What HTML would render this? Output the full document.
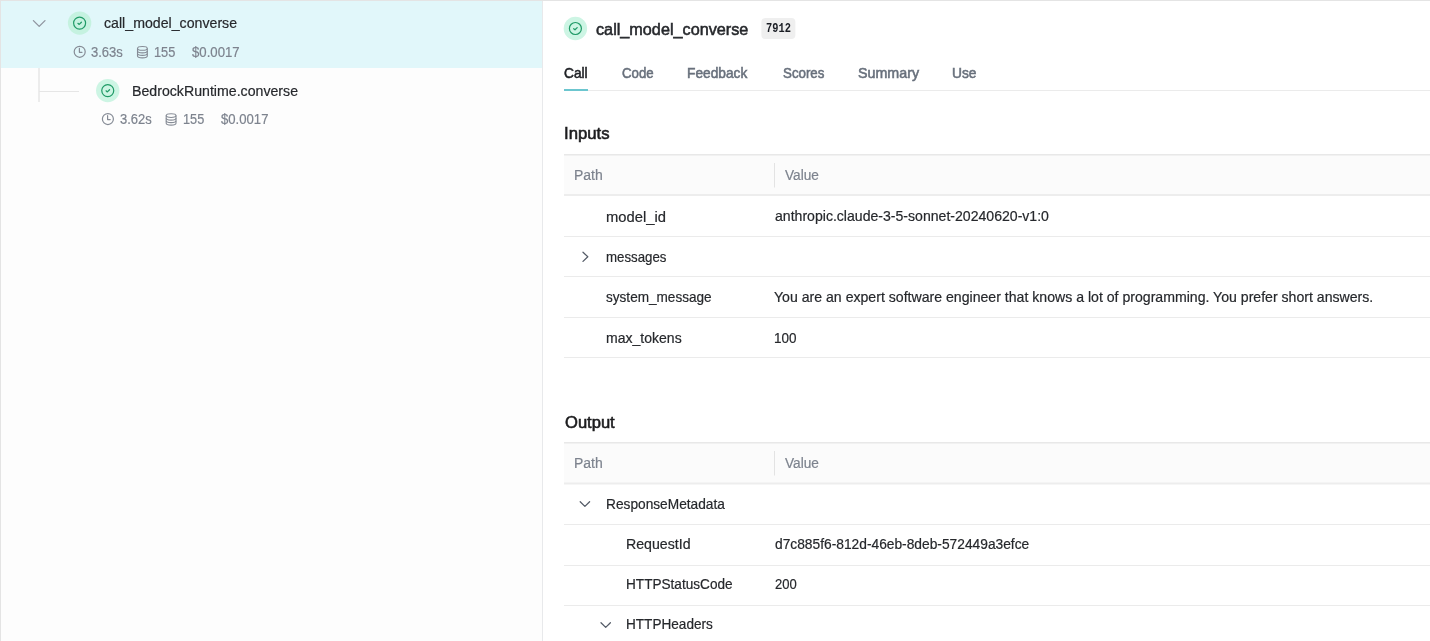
<!DOCTYPE html>
<html><head><meta charset="utf-8">
<style>
html,body{margin:0;padding:0;width:1430px;height:641px;overflow:hidden;background:#fff;font-family:"Liberation Sans",sans-serif;}
.t{position:absolute;white-space:pre;line-height:1;transform-origin:0 0;}
svg{position:absolute;left:0;top:0;}
</style></head><body>
<svg width="1430" height="641" viewBox="0 0 1430 641">
 <!-- left panel -->
 <rect x="0" y="0" width="543" height="641" fill="#fdfdfd"/>
 <rect x="1" y="1" width="541" height="67" fill="#e1f7fa"/>
 <rect x="0" y="0" width="1430" height="1" fill="#e4e4e4"/>
 <rect x="0" y="0" width="1" height="641" fill="#e4e4e4"/>
 <rect x="542" y="1" width="1" height="640" fill="#e8e9eb"/>
 <!-- tree lines -->
 <rect x="38" y="68" width="2" height="34" fill="#ececec"/>
 <rect x="39" y="91" width="40" height="1" fill="#e6e6e6"/>
 <!-- tree chevron -->
 <polyline points="33.4,20.6 39.2,26.4 45,20.6" fill="none" stroke="#8f949e" stroke-width="1.3" stroke-linecap="round" stroke-linejoin="round"/>
 <!-- status icons -->
 <g id="st1" transform="translate(79.6,23.1)">
  <circle r="11.7" fill="#c5f2e0"/>
  <circle r="6" fill="none" stroke="#1f9a66" stroke-width="1.2"/>
  <polyline points="-1.7,0.2 -0.4,1.3 1.8,-0.9" fill="none" stroke="#1f9a66" stroke-width="1.25" stroke-linecap="round" stroke-linejoin="round"/>
 </g>
 <g transform="translate(107.75,90.6)">
  <circle r="11.7" fill="#cdf5e4"/>
  <circle r="6" fill="none" stroke="#1f9a66" stroke-width="1.2"/>
  <polyline points="-1.7,0.2 -0.4,1.3 1.8,-0.9" fill="none" stroke="#1f9a66" stroke-width="1.25" stroke-linecap="round" stroke-linejoin="round"/>
 </g>
 <g transform="translate(575.4,28.5)">
  <circle r="11.7" fill="#cdf5e4"/>
  <circle r="6" fill="none" stroke="#1f9a66" stroke-width="1.2"/>
  <polyline points="-1.7,0.2 -0.4,1.3 1.8,-0.9" fill="none" stroke="#1f9a66" stroke-width="1.25" stroke-linecap="round" stroke-linejoin="round"/>
 </g>
 <!-- clock icons -->
 <g transform="translate(79.7,51.8)" fill="none" stroke="#858b95" stroke-width="1.2" stroke-linecap="round" stroke-linejoin="round">
  <circle r="5.5"/><polyline points="-0.3,-3.4 -0.3,0.5 2.3,0.5"/>
 </g>
 <g transform="translate(107.9,119.05)" fill="none" stroke="#858b95" stroke-width="1.2" stroke-linecap="round" stroke-linejoin="round">
  <circle r="5.5"/><polyline points="-0.3,-3.4 -0.3,0.5 2.3,0.5"/>
 </g>
 <!-- db icons -->
 <g transform="translate(142.4,52.3)" fill="none" stroke="#858b95" stroke-width="1.1">
  <ellipse cx="0" cy="-3.9" rx="4.9" ry="1.9"/>
  <path d="M-4.9,-3.9 V3.7 A4.9,1.9 0 0 0 4.9,3.7 V-3.9"/>
  <path d="M-4.9,-1.3 A4.9,1.9 0 0 0 4.9,-1.3"/>
  <path d="M-4.9,1.2 A4.9,1.9 0 0 0 4.9,1.2"/>
 </g>
 <g transform="translate(171.1,119.5)" fill="none" stroke="#858b95" stroke-width="1.1">
  <ellipse cx="0" cy="-3.9" rx="4.9" ry="1.9"/>
  <path d="M-4.9,-3.9 V3.7 A4.9,1.9 0 0 0 4.9,3.7 V-3.9"/>
  <path d="M-4.9,-1.3 A4.9,1.9 0 0 0 4.9,-1.3"/>
  <path d="M-4.9,1.2 A4.9,1.9 0 0 0 4.9,1.2"/>
 </g>
 <!-- badge -->
 <rect x="761.4" y="18" width="34" height="21" rx="4" fill="#efefef"/>
 <!-- tabs -->
 <rect x="564" y="90" width="866" height="1" fill="#ebebeb"/>
 <rect x="564" y="89" width="24" height="2" fill="#6cc6cf"/>
 <!-- inputs table -->
 <rect x="564" y="155" width="866" height="40" fill="#fbfbfb"/>
 <rect x="564" y="154" width="866" height="1.5" fill="#e8e8e8"/>
 <rect x="564" y="194" width="866" height="2" fill="#ededed"/>
 <rect x="774" y="163" width="1" height="24.5" fill="#e3e3e3"/>
 <rect x="564" y="236" width="866" height="1" fill="#ebebeb"/>
 <rect x="564" y="276" width="866" height="1" fill="#ebebeb"/>
 <rect x="564" y="317" width="866" height="1" fill="#ebebeb"/>
 <rect x="564" y="357" width="866" height="1" fill="#ebebeb"/>
 <polyline points="583,252.2 587.8,256.8 583,261.4" fill="none" stroke="#535a66" stroke-width="1.25" stroke-linecap="round" stroke-linejoin="round"/>
 <!-- output table -->
 <rect x="564" y="443" width="866" height="40" fill="#fbfbfb"/>
 <rect x="564" y="442" width="866" height="1.5" fill="#e8e8e8"/>
 <rect x="564" y="482.5" width="866" height="2" fill="#ededed"/>
 <rect x="774" y="451" width="1" height="24.5" fill="#e3e3e3"/>
 <rect x="564" y="524" width="866" height="1" fill="#ebebeb"/>
 <rect x="564" y="565" width="866" height="1" fill="#ebebeb"/>
 <rect x="564" y="605" width="866" height="1" fill="#ebebeb"/>
 <polyline points="580.2,501.7 584.9,506.4 589.6,501.7" fill="none" stroke="#535a66" stroke-width="1.25" stroke-linecap="round" stroke-linejoin="round"/>
 <polyline points="601,622.7 605.7,627.4 610.4,622.7" fill="none" stroke="#535a66" stroke-width="1.25" stroke-linecap="round" stroke-linejoin="round"/>
</svg>
<div id="tx" style="position:absolute;left:0;top:0;width:1430px;height:641px;will-change:transform">
<div class="t" style="left:103.90px;top:16.00px;font-size:14.3px;-webkit-text-stroke:0.2px #26282c;color:#26282c;transform:scaleX(0.9907)">call_model_converse</div>
<div class="t" style="left:91.40px;top:46.00px;font-size:13.8px;-webkit-text-stroke:0.2px #7d838e;color:#7d838e;transform:scaleX(0.9423)">3.63s</div>
<div class="t" style="left:154.27px;top:46.00px;font-size:13.8px;-webkit-text-stroke:0.2px #7d838e;color:#7d838e;transform:scaleX(0.9263)">155</div>
<div class="t" style="left:192.00px;top:46.00px;font-size:13.8px;-webkit-text-stroke:0.2px #7d838e;color:#7d838e;transform:scaleX(0.9553)">$0.0017</div>
<div class="t" style="left:131.51px;top:84.00px;font-size:14.3px;-webkit-text-stroke:0.2px #26282c;color:#26282c;transform:scaleX(0.9903)">BedrockRuntime.converse</div>
<div class="t" style="left:119.90px;top:113.00px;font-size:13.8px;-webkit-text-stroke:0.2px #7d838e;color:#7d838e;transform:scaleX(0.9394)">3.62s</div>
<div class="t" style="left:182.78px;top:113.00px;font-size:13.8px;-webkit-text-stroke:0.2px #7d838e;color:#7d838e;transform:scaleX(0.9219)">155</div>
<div class="t" style="left:220.80px;top:113.00px;font-size:13.8px;-webkit-text-stroke:0.2px #7d838e;color:#7d838e;transform:scaleX(0.9512)">$0.0017</div>
<div class="t" style="left:595.85px;top:21.00px;font-size:16.5px;-webkit-text-stroke:0.55px #26282c;color:#26282c;transform:scaleX(0.9827)">call_model_converse</div>
<div class="t" style="left:765.80px;top:23.00px;font-size:12.2px;font-family:'Liberation Mono';font-weight:700;color:#1a1d24;transform:scaleX(0.8500)">7912</div>
<div class="t" style="left:564.40px;top:66.00px;font-size:14.5px;-webkit-text-stroke:0.55px #202226;color:#202226;transform:scaleX(0.9452)">Call</div>
<div class="t" style="left:621.90px;top:66.00px;font-size:14.5px;-webkit-text-stroke:0.55px #68707c;color:#68707c;transform:scaleX(0.9133)">Code</div>
<div class="t" style="left:686.95px;top:66.00px;font-size:14.5px;-webkit-text-stroke:0.55px #68707c;color:#68707c;transform:scaleX(0.9460)">Feedback</div>
<div class="t" style="left:782.50px;top:66.00px;font-size:14.5px;-webkit-text-stroke:0.55px #68707c;color:#68707c;transform:scaleX(0.9180)">Scores</div>
<div class="t" style="left:857.50px;top:66.00px;font-size:14.5px;-webkit-text-stroke:0.55px #68707c;color:#68707c;transform:scaleX(0.9843)">Summary</div>
<div class="t" style="left:952.05px;top:66.00px;font-size:14.5px;-webkit-text-stroke:0.55px #68707c;color:#68707c;transform:scaleX(0.9506)">Use</div>
<div class="t" style="left:563.93px;top:126.00px;font-size:15.6px;-webkit-text-stroke:0.55px #1c1c1e;color:#1c1c1e;transform:scaleX(1.0724)">Inputs</div>
<div class="t" style="left:574.20px;top:168.00px;font-size:14.0px;-webkit-text-stroke:0.2px #7d838e;color:#7d838e;transform:scaleX(0.9995)">Path</div>
<div class="t" style="left:784.80px;top:168.00px;font-size:14.0px;-webkit-text-stroke:0.2px #7d838e;color:#7d838e;transform:scaleX(0.9748)">Value</div>
<div class="t" style="left:606.40px;top:210.00px;font-size:14.1px;-webkit-text-stroke:0.2px #26282c;color:#26282c;transform:scaleX(1.0469)">model_id</div>
<div class="t" style="left:774.50px;top:209.00px;font-size:14.1px;-webkit-text-stroke:0.2px #26282c;color:#26282c;transform:scaleX(0.9989)">anthropic.claude-3-5-sonnet-20240620-v1:0</div>
<div class="t" style="left:606.40px;top:250.00px;font-size:14.1px;-webkit-text-stroke:0.2px #26282c;color:#26282c;transform:scaleX(0.9410)">messages</div>
<div class="t" style="left:606.40px;top:290.00px;font-size:14.1px;-webkit-text-stroke:0.2px #26282c;color:#26282c;transform:scaleX(0.9634)">system_message</div>
<div class="t" style="left:774.30px;top:290.00px;font-size:14.1px;-webkit-text-stroke:0.2px #26282c;color:#26282c;transform:scaleX(1.0008)">You are an expert software engineer that knows a lot of programming. You prefer short answers.</div>
<div class="t" style="left:606.40px;top:331.00px;font-size:14.1px;-webkit-text-stroke:0.2px #26282c;color:#26282c;transform:scaleX(0.9955)">max_tokens</div>
<div class="t" style="left:774.04px;top:331.00px;font-size:14.1px;-webkit-text-stroke:0.2px #26282c;color:#26282c;transform:scaleX(0.9569)">100</div>
<div class="t" style="left:564.60px;top:415.00px;font-size:15.6px;-webkit-text-stroke:0.55px #1c1c1e;color:#1c1c1e;transform:scaleX(1.0615)">Output</div>
<div class="t" style="left:574.00px;top:456.00px;font-size:14.0px;-webkit-text-stroke:0.2px #7d838e;color:#7d838e;transform:scaleX(0.9995)">Path</div>
<div class="t" style="left:784.80px;top:456.00px;font-size:14.0px;-webkit-text-stroke:0.2px #7d838e;color:#7d838e;transform:scaleX(0.9748)">Value</div>
<div class="t" style="left:605.53px;top:497.00px;font-size:14.1px;-webkit-text-stroke:0.2px #26282c;color:#26282c;transform:scaleX(0.9729)">ResponseMetadata</div>
<div class="t" style="left:626.10px;top:537.00px;font-size:14.1px;-webkit-text-stroke:0.2px #26282c;color:#26282c;transform:scaleX(1.0047)">RequestId</div>
<div class="t" style="left:774.50px;top:537.00px;font-size:14.1px;-webkit-text-stroke:0.2px #26282c;color:#26282c;transform:scaleX(0.9772)">d7c885f6-812d-46eb-8deb-572449a3efce</div>
<div class="t" style="left:626.13px;top:577.00px;font-size:14.1px;-webkit-text-stroke:0.2px #26282c;color:#26282c;transform:scaleX(0.9653)">HTTPStatusCode</div>
<div class="t" style="left:774.50px;top:577.00px;font-size:14.1px;-webkit-text-stroke:0.2px #26282c;color:#26282c;transform:scaleX(0.9250)">200</div>
<div class="t" style="left:626.14px;top:617.00px;font-size:14.1px;-webkit-text-stroke:0.2px #26282c;color:#26282c;transform:scaleX(0.9638)">HTTPHeaders</div>
</div>
</body></html>
